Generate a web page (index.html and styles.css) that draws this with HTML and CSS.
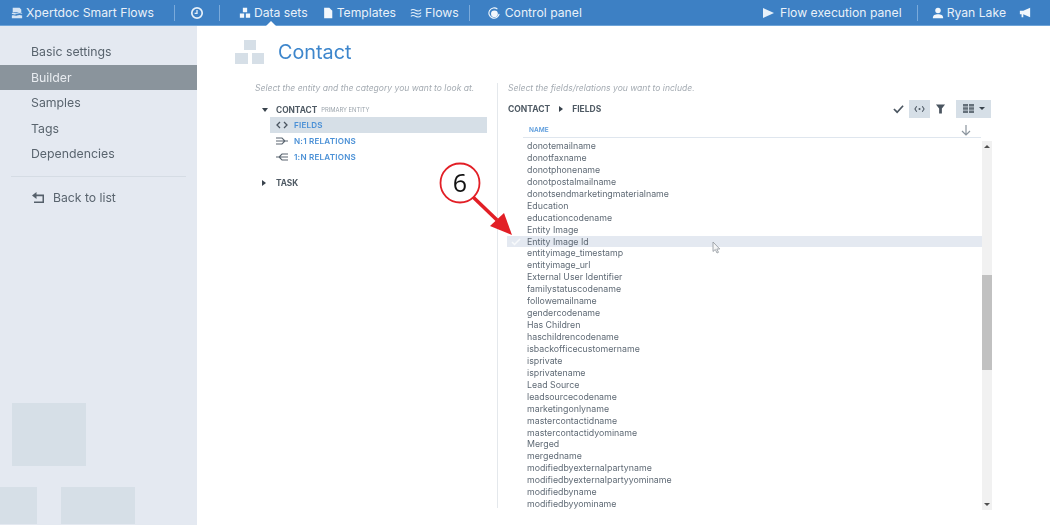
FILE: index.html
```html
<!DOCTYPE html>
<html lang="en">
<head>
<meta charset="utf-8">
<title>Contact</title>
<link rel="stylesheet" href="styles.css">
</head>
<body>
<header class="topbar">
  <div class="brand"><svg class="ico" viewBox="0 0 14 14"><path d="M2 1h8l2 2v3H2zM1 7c3-1 4 1 6 0s4-1 6 0v1c-2-1-4-1-6 0s-3 1-6 0zM1 10c3-1 4 1 6 0s4-1 6 0v3H1z" fill="#d5e4f4"/></svg><span>Xpertdoc Smart Flows</span></div>
  <i class="sep sep-a"></i>
  <svg class="ico clock" viewBox="0 0 14 14"><circle cx="7" cy="7" r="5.2" fill="none" stroke="#e6f0fa" stroke-width="1.7"/><path d="M7 4v3.4H4.6" fill="none" stroke="#e6f0fa" stroke-width="1.3"/></svg>
  <i class="sep sep-b"></i>
  <nav class="nav">
    <a class="nav-item active"><svg class="ico" viewBox="0 0 14 14"><path d="M4.500 1h5v5h-5zM1 7.500h5v5H1zM8 7.500h5v5H8z" fill="#f2f7fc"/></svg>Data sets</a>
    <a class="nav-item"><svg class="ico" viewBox="0 0 14 14"><path d="M2.500 1h6l3.500 3.500V13h-9.500z" fill="#f2f7fc"/></svg>Templates</a>
    <a class="nav-item"><svg class="ico" viewBox="0 0 14 14"><path d="M1 4c2-2 4-1 6 0s4 1 6-1M1 7.500c2-2 4-1 6 0s4 1 6-1M1 11c2-2 4-1 6 0s4 1 6-1" fill="none" stroke="#e6f0fa" stroke-width="1.200"/></svg>Flows</a>
  </nav>
  <i class="sep sep-c"></i>
  <a class="nav-item control"><svg class="ico" viewBox="0 0 14 14"><path d="M11 2.500A6 6 0 1 0 13 8" fill="none" stroke="#f2f7fc" stroke-width="1.300"/><circle cx="7.500" cy="8" r="4" fill="#f2f7fc"/></svg>Control panel</a>
  <div class="top-right">
    <a class="nav-item exec"><svg class="play" viewBox="0 0 11 10"><path d="M0 0l11 5-11 5z" fill="#e6f0fa"/></svg>Flow execution panel</a>
    <i class="sep sep-d"></i>
    <a class="nav-item user"><svg class="ico" viewBox="0 0 14 14"><circle cx="7" cy="4" r="3.200" fill="#f2f7fc"/><path d="M1 13c0-3.500 2.500-4.500 6-4.500s6 1 6 4.500z" fill="#f2f7fc"/></svg>Ryan Lake</a>
    <svg class="ico horn" viewBox="0 0 14 14"><path d="M1 4.500h4l8-3.500v11L5 8.500v3.500H3V8.500H1z" fill="#f2f7fc"/></svg>
  </div>
</header>
<div class="caret"></div>
<div class="page">
  <aside class="sidebar">
    <ul class="menu">
      <li>Basic settings</li>
      <li class="current">Builder</li>
      <li>Samples</li>
      <li>Tags</li>
      <li>Dependencies</li>
    </ul>
    <div class="back"><svg class="back-ico" viewBox="0 0 14 12"><path d="M5.500 0v2.500H13V11H3V9.500h8.500V4.200h-6V7L1 3.500z" fill="#55606b"/></svg>Back to list</div>
    <div class="deco deco-a"></div>
    <div class="deco deco-b"></div>
    <div class="deco deco-c"></div>
  </aside>
  <main class="content">
    <div class="title-row">
      <svg class="title-ico" viewBox="0 0 29 24"><path d="M9 0h12v10H9zM0 13h13v11H0zM17 13h12v11H17z" fill="#d6dfe7"/></svg>
      <h1>Contact</h1>
    </div>
    <div class="panels">
      <section class="left">
        <p class="hint">Select the entity and the category you want to look at.</p>
        <div class="entity first"><span class="tri-down"></span><b>CONTACT</b><small>PRIMARY ENTITY</small></div>
        <div class="cat selected"><svg class="cat-ico" viewBox="0 0 12 8"><path d="M4 1L1 4l3 3M8 1l3 3-3 3" fill="none" stroke="#4a5560" stroke-width="1.300"/></svg>FIELDS</div>
        <div class="cat"><svg class="cat-ico" viewBox="0 0 12 8"><path d="M0 1h6l3 3-3 3H0M0 4h12" fill="none" stroke="#5a6570" stroke-width="1.100"/></svg>N:1 RELATIONS</div>
        <div class="cat"><svg class="cat-ico" viewBox="0 0 12 8"><path d="M12 1H6L3 4l3 3h6M12 4H0" fill="none" stroke="#5a6570" stroke-width="1.100"/></svg>1:N RELATIONS</div>
        <div class="entity second"><span class="tri-right"></span><b>TASK</b></div>
      </section>
      <section class="right">
        <p class="hint">Select the fields/relations you want to include.</p>
        <div class="toolbar">
          <div class="crumb"><b>CONTACT</b><span class="tri-right"></span><b>FIELDS</b></div>
          <div class="tools">
            <svg class="tool-ico" viewBox="0 0 12 10"><path d="M1 5l3.500 3.500L11 1.500" fill="none" stroke="#4a5560" stroke-width="1.800"/></svg>
            <span class="tool-btn"><svg class="tool-ico" viewBox="0 0 12 10"><path d="M3 2L1 5l2 3M9 2l2 3-2 3" fill="none" stroke="#4a5560" stroke-width="1.100"/><circle cx="6" cy="5" r="1.100" fill="#4a5560"/></svg></span>
            <svg class="tool-ico funnel" viewBox="0 0 12 10"><path d="M1 0h10L7.500 4.500V10h-3V4.500z" fill="#4a5560"/></svg>
            <span class="view-btn"><svg class="view-ico" viewBox="0 0 11 9"><path d="M0 0h5v2.500H0zM6 0h5v2.500H6zM0 3.300h5v2.400H0zM6 3.300h5v2.400H6zM0 6.500h5V9H0zM6 6.500h5V9H6z" fill="#65707a"/></svg><span class="tri-small"></span></span>
          </div>
        </div>
        <div class="thead"><span>NAME</span><svg class="sort" viewBox="0 0 10 11"><path d="M5 0v10M1 6l4 4 4-4" fill="none" stroke="#8b959e" stroke-width="1.200"/></svg></div>
        <div class="list-wrap">
          <ul class="rows">
            <li>donotemailname</li>
            <li>donotfaxname</li>
            <li>donotphonename</li>
            <li>donotpostalmailname</li>
            <li>donotsendmarketingmaterialname</li>
            <li>Education</li>
            <li>educationcodename</li>
            <li>Entity Image</li>
            <li class="hover"><svg class="row-check" viewBox="0 0 10 8"><path d="M1 4l2.500 2.500L9 1" fill="none" stroke="#f7f9fb" stroke-width="1.500"/></svg>Entity Image Id</li>
            <li>entityimage_timestamp</li>
            <li>entityimage_url</li>
            <li>External User Identifier</li>
            <li>familystatuscodename</li>
            <li>followemailname</li>
            <li>gendercodename</li>
            <li>Has Children</li>
            <li>haschildrencodename</li>
            <li>isbackofficecustomername</li>
            <li>isprivate</li>
            <li>isprivatename</li>
            <li>Lead Source</li>
            <li>leadsourcecodename</li>
            <li>marketingonlyname</li>
            <li>mastercontactidname</li>
            <li>mastercontactidyominame</li>
            <li>Merged</li>
            <li>mergedname</li>
            <li>modifiedbyexternalpartyname</li>
            <li>modifiedbyexternalpartyyominame</li>
            <li>modifiedbyname</li>
            <li>modifiedbyyominame</li>
          </ul>
          <div class="scrollbar"><span class="up"></span><span class="thumb"></span><span class="down"></span></div>
        </div>
      </section>
    </div>
  </main>
</div>
<svg class="callout" viewBox="0 0 90 80">
  <circle cx="21" cy="21" r="19.500" fill="#fff" stroke="#e21f26" stroke-width="1.800"/>
  <path d="M34 35L58 58" stroke="#e21f26" stroke-width="3.600"/>
  <path d="M73 73L51 64 65 51z" fill="#e21f26"/>
  <text x="21" y="29.500" text-anchor="middle" class="callout-num">6</text>
</svg>
<svg class="cursor" viewBox="0 0 10 13"><path d="M1 1v9.500l2.300-2 1.700 3.500 1.500-.7-1.700-3.300h3z" fill="#f4f5f6" stroke="#8f969c" stroke-width=".8"/></svg>
</body>
</html>
```
FILE: styles.css
```css
* { box-sizing: border-box; }
html, body { margin: 0; height: 525px; overflow: hidden; }
body { font-family: Inter, Roboto, "Liberation Sans", sans-serif; color: #5b6670; background: #fff; position: relative; filter: blur(.4px); }
ul { list-style: none; margin: 0; padding: 0; }
p, h1 { margin: 0; }
svg { display: block; flex: none; }

.topbar { height: 26px; background: #3d80c4; border-bottom: 1px solid #6ea4d8; display: flex; align-items: center; color: #e9f1f9; font-size: 12.200px; padding-left: 11px; }
.ico { width: 12px; height: 12px; }
.brand { display: flex; align-items: center; gap: 3px; }
.sep { width: 1px; height: 16px; background: #7aaadb; display: block; flex: none; }
.sep-a { margin-left: 20px; }
.clock { margin-left: 15px; width: 14px; height: 14px; }
.sep-b { margin-left: 15px; }
.nav { display: flex; margin-left: 19px; gap: 14px; }
.nav-item { display: flex; align-items: center; gap: 3px; white-space: nowrap; }
.sep-c { margin-left: 10px; }
.control { margin-left: 18px; gap: 5px; }
.top-right { margin-left: auto; display: flex; align-items: center; padding-right: 18px; }
.play { width: 11px; height: 10px; }
.exec { gap: 6px; }
.sep-d { margin-left: 15px; margin-right: 13px; }
.user .ico { width: 14px; }
.user { gap: 2px; }
.horn { margin-left: 12px; width: 14px; }
.caret { position: absolute; left: 266px; top: 21px; width: 0; height: 0; border-left: 5px solid transparent; border-right: 5px solid transparent; border-bottom: 5px solid #fff; }

.page { display: flex; height: 499px; }
.sidebar { width: 197px; flex: none; background: #e4e9f1; padding-top: 13px; position: relative; overflow: hidden; }
.menu li { height: 25.500px; line-height: 26.500px; padding-left: 31px; font-size: 12.300px; color: #59646e; }
.menu .current { background: #8a949c; color: #e8ecf0; }
.back { margin: 9px 0 0 11px; padding: 13px 0 0 20px; border-top: 1px solid #d5dce4; width: 175px; display: flex; align-items: center; gap: 8px; font-size: 12.200px; color: #59646e; line-height: 16px; }
.back-ico { width: 14px; height: 12px; }
.deco { position: absolute; background: #d6dfe7; }
.deco-a { left: 12px; top: 377px; width: 74px; height: 63px; }
.deco-b { left: 0; top: 461px; width: 37px; height: 37px; }
.deco-c { left: 61px; top: 461px; width: 74px; height: 37px; }

.content { flex: 1; min-width: 0; }
.title-row { display: flex; align-items: flex-start; gap: 14px; padding: 14px 0 0 235px; margin-left: -197px; height: 57px; }
.title-ico { width: 29px; height: 24px; }
.title-row h1 { font-size: 19.800px; font-weight: 400; color: #3d86cc; line-height: 25px; }
.panels { display: flex; height: 425px; }
.hint { font-size: 8.550px; font-style: italic; color: #a4abb2; line-height: 11px; height: 11px; white-space: nowrap; }
.left { width: 300px; padding: 0 10px 0 58px; flex: none; }
.entity { display: flex; align-items: center; font-size: 8.300px; color: #4f5a64; line-height: 12px; }
.entity b { font-weight: 700; }
.entity small { font-size: 5.800px; color: #9aa3ab; margin-left: 4px; }
.entity.first { margin: 10px 0 0 7px; }
.entity.second { margin: 12px 0 0 7px; }
.tri-down { width: 0; height: 0; border-left: 3.500px solid transparent; border-right: 3.500px solid transparent; border-top: 4px solid #39434d; margin-right: 8px; }
.entity .tri-right { margin-right: 10px; }
.tri-right { width: 0; height: 0; border-top: 3px solid transparent; border-bottom: 3px solid transparent; border-left: 4px solid #39434d; }
.cat { height: 16px; margin-left: 15px; padding-left: 6px; display: flex; align-items: center; gap: 6px; font-size: 8.100px; font-weight: 600; color: #4a90d6; letter-spacing: .2px; }
.cat.selected { background: #d6dfe7; margin-top: 1px; }
.cat-ico { width: 12px; height: 8px; }

.right { width: 495px; flex: none; border-left: 1px solid #e4e8ec; padding-left: 10px; position: relative; }
.toolbar { height: 23px; margin-top: 3px; display: flex; align-items: center; justify-content: space-between; padding-right: 1px; }
.crumb { display: flex; align-items: center; gap: 9px; font-size: 8.500px; color: #4f5a64; padding-top: 1px; }
.crumb b { font-weight: 700; }
.tools { display: flex; align-items: center; }
.tool-ico { width: 11px; height: 10px; }
.tool-btn { width: 21px; height: 18px; background: #d6dfe7; margin-left: 5px; display: flex; align-items: center; justify-content: center; }
.funnel { margin-left: 5px; }
.view-btn { width: 35px; height: 18px; background: #d6dfe7; margin-left: 10px; display: flex; align-items: center; justify-content: center; gap: 5px; }
.view-ico { width: 11px; height: 9px; }
.tri-small { width: 0; height: 0; border-left: 3px solid transparent; border-right: 3px solid transparent; border-top: 3px solid #39434d; }
.thead { height: 18px; width: 458px; margin-left: 15px; border-bottom: 1px solid #dfe6ee; display: flex; align-items: center; justify-content: space-between; font-size: 6.500px; font-weight: 600; color: #5a9bdc; padding: 3px 10px 0 6px; }
.sort { width: 10px; height: 11px; }
.list-wrap { display: flex; margin-top: 2px; margin-left: -1px; }
.rows { width: 475px; }
.rows li { height: 11.950px; line-height: 12px; padding-left: 20px; font-size: 8.800px; color: #5f6a75; position: relative; white-space: nowrap; }
.rows .hover { background: #e4e9f1; }
.row-check { position: absolute; left: 4px; top: 2px; width: 10px; height: 8px; }
.scrollbar { width: 10px; margin-top: 1px; height: 369px; background: #f1f1f1; position: relative; }
.thumb { position: absolute; left: 0; top: 134px; width: 10px; height: 95px; background: #c1c1c1; }
.up, .down { position: absolute; left: 2px; width: 0; height: 0; border-left: 3px solid transparent; border-right: 3px solid transparent; }
.up { top: 4px; border-bottom: 3px solid #505050; }
.down { bottom: 4px; border-top: 3px solid #505050; }

.callout { position: absolute; left: 439px; top: 162px; width: 90px; height: 80px; }
.callout-num { font-family: "Open Sans", sans-serif; font-size: 25px; fill: #111; }
.cursor { position: absolute; left: 712px; top: 241px; width: 10px; height: 13px; }
```
